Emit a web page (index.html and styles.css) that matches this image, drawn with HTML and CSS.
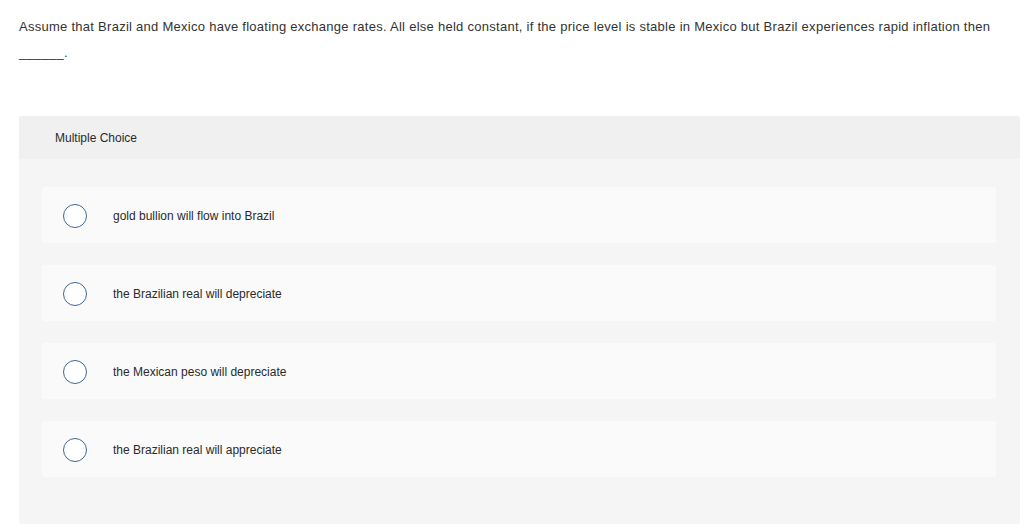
FILE: index.html
```html
<!DOCTYPE html>
<html>
<head>
<meta charset="utf-8">
<link rel="stylesheet" href="styles.css">
</head>
<body>
<div class="page">
  <p class="question">Assume that Brazil and Mexico have floating exchange rates. All else held constant, if the price level is stable in Mexico but Brazil experiences rapid inflation then <span class="blank">______</span>.</p>
  <div class="card">
    <div class="card-head">Multiple Choice</div>
    <div class="card-body">
      <div class="option"><span class="radio"></span><span class="label">gold bullion will flow into Brazil</span></div>
      <div class="option"><span class="radio"></span><span class="label">the Brazilian real will depreciate</span></div>
      <div class="option"><span class="radio"></span><span class="label">the Mexican peso will depreciate</span></div>
      <div class="option"><span class="radio"></span><span class="label">the Brazilian real will appreciate</span></div>
    </div>
  </div>
</div>
</body>
</html>
```

FILE: styles.css
```css
html, body {
  margin: 0;
  padding: 0;
  background: #ffffff;
}
body {
  font-family: "Liberation Sans", Arial, sans-serif;
  color: #333333;
}
.page {
  padding: 14px 4px 0 19px;
}
.question {
  margin: 0;
  font-size: 13px;
  line-height: 26px;
  color: #333;
  letter-spacing: 0.27px;
}
.card {
  margin-top: 50px;
  width: 1001px;
  border-radius: 3px;
  overflow: hidden;
  background: #f5f5f5;
}
.card-head {
  background: #f0f0f0;
  height: 43px;
  display: flex;
  align-items: center;
  padding-left: 36px;
  font-size: 12px;
  color: #2a2a2a;
}
.card-body {
  padding: 28px 24px 47px 23px;
  display: flex;
  flex-direction: column;
  gap: 22px;
}
.option {
  height: 56px;
  background: #fafafa;
  border-radius: 2px;
  display: flex;
  align-items: center;
  padding-left: 21px;
}
.radio {
  width: 22px;
  height: 22px;
  border: 1px solid #3d6894;
  border-radius: 50%;
  background: #fff;
  flex: none;
  margin-top: 1px;
}
.label {
  margin-left: 26px;
  font-size: 12px;
  color: #2a2a2a;
  padding-top: 2px;
}
```
